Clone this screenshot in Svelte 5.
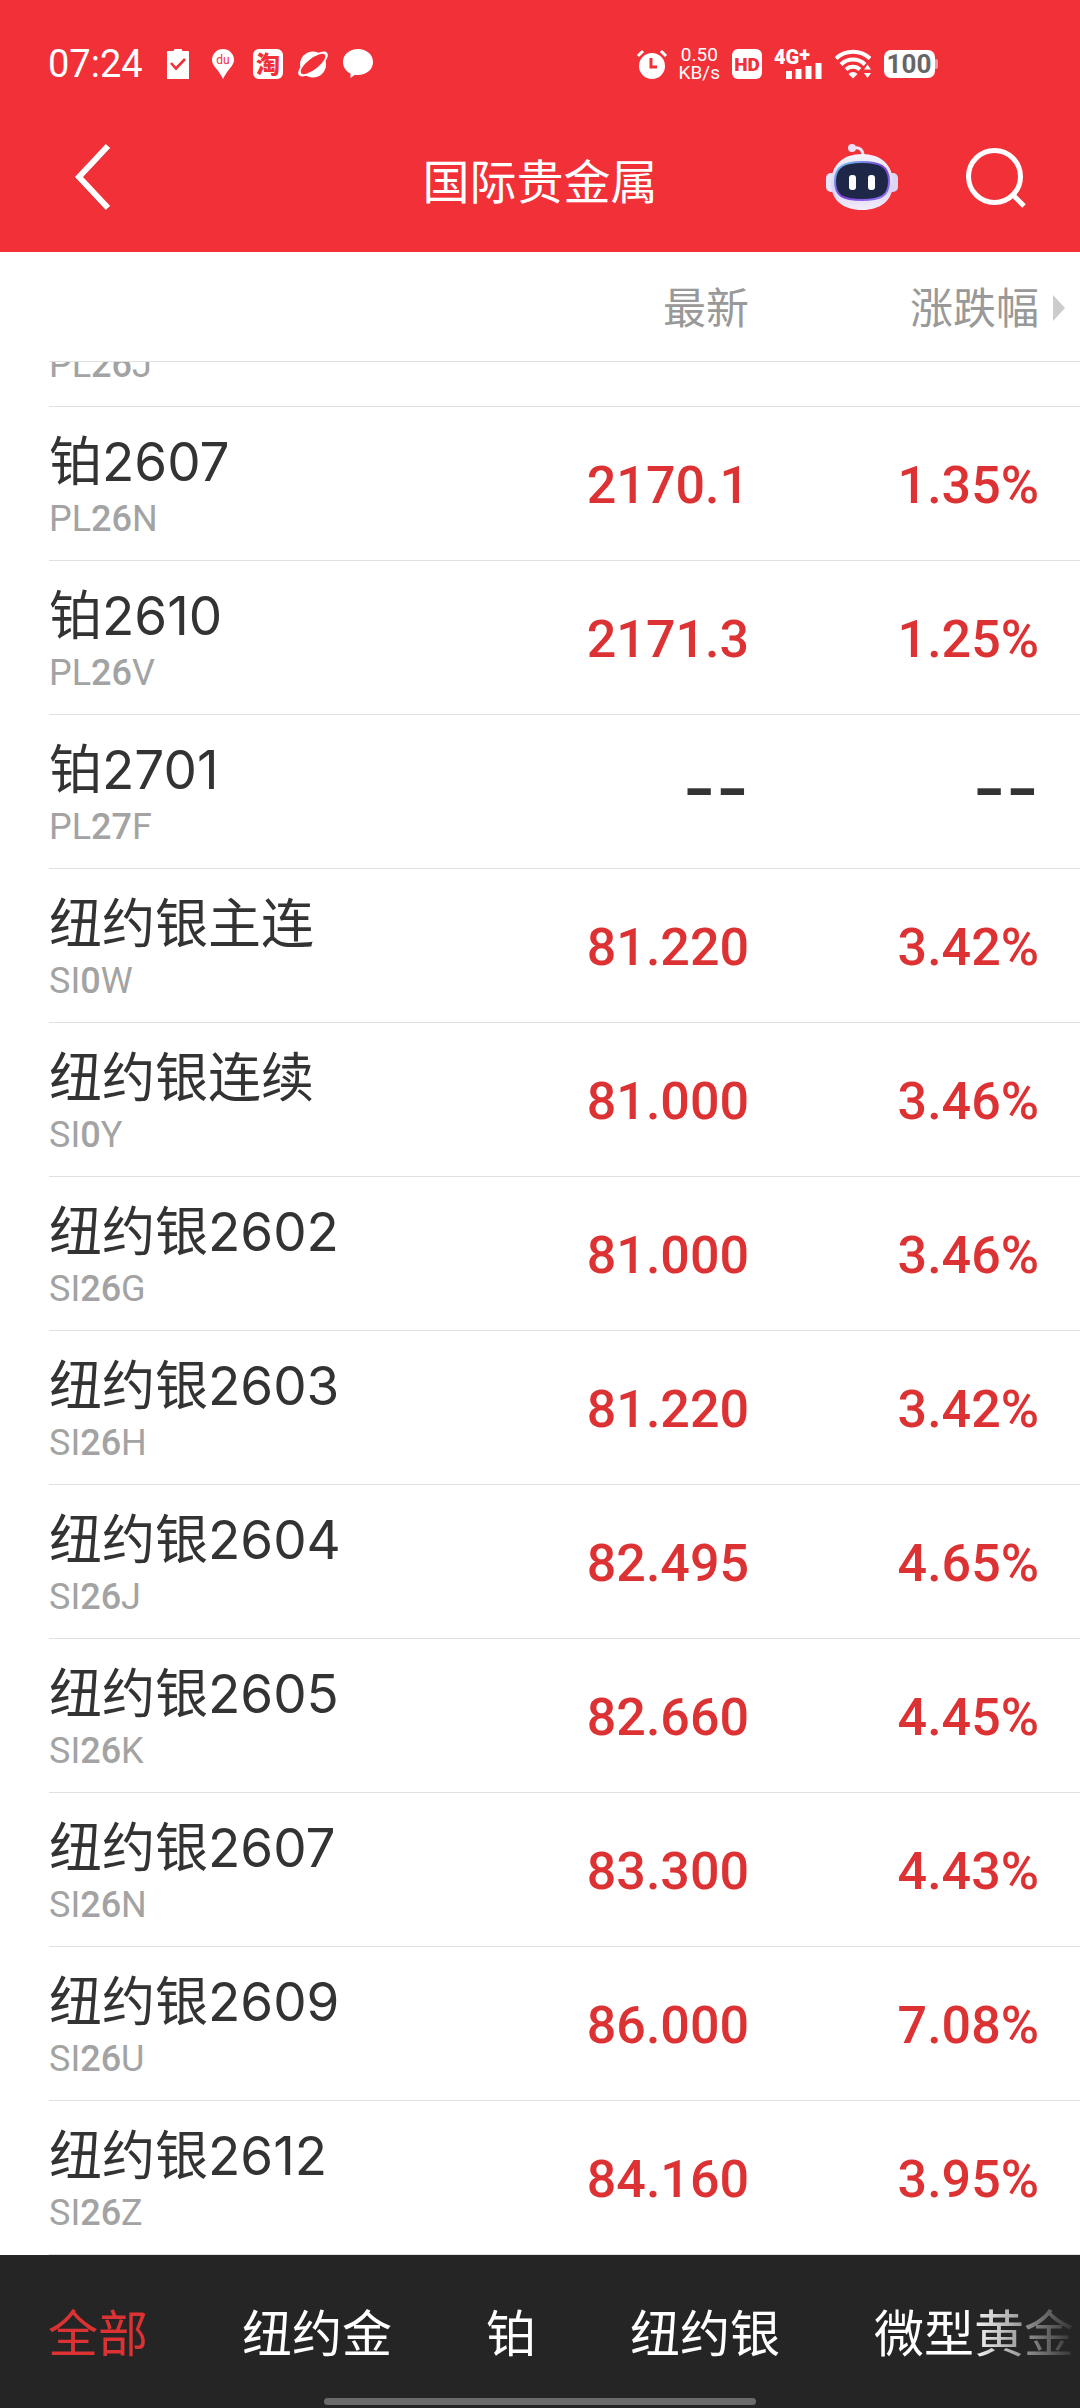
<script lang="ts">
  import { onMount } from 'svelte';

  const quotes = [
    { name: '', code: 'PL26J', price: '', change: '' },
    { name: '铂2607', code: 'PL26N', price: '2170.1', change: '1.35%' },
    { name: '铂2610', code: 'PL26V', price: '2171.3', change: '1.25%' },
    { name: '铂2701', code: 'PL27F', price: '--', change: '--' },
    { name: '纽约银主连', code: 'SI0W', price: '81.220', change: '3.42%' },
    { name: '纽约银连续', code: 'SI0Y', price: '81.000', change: '3.46%' },
    { name: '纽约银2602', code: 'SI26G', price: '81.000', change: '3.46%' },
    { name: '纽约银2603', code: 'SI26H', price: '81.220', change: '3.42%' },
    { name: '纽约银2604', code: 'SI26J', price: '82.495', change: '4.65%' },
    { name: '纽约银2605', code: 'SI26K', price: '82.660', change: '4.45%' },
    { name: '纽约银2607', code: 'SI26N', price: '83.300', change: '4.43%' },
    { name: '纽约银2609', code: 'SI26U', price: '86.000', change: '7.08%' },
    { name: '纽约银2612', code: 'SI26Z', price: '84.160', change: '3.95%' }
  ];

  const tabs = ['全部', '纽约金', '铂', '纽约银', '微型黄金'];

  let activeTab = $state('全部');
  let list: HTMLElement;

  // digits in a code are drawn heavier than its letters
  function splitCode(code: string) {
    return code.match(/\d+|\D+/g) ?? [];
  }

  onMount(() => {
    list.scrollTop = list.scrollHeight;
  });
</script>

<div class="app">
  <header>
    <div class="status-bar">
      <span class="time">07:24</span>
      <div class="notifications">
        <svg width="22" height="30" viewBox="0 0 22 30">
          <path d="M1 2h5.500l1-2h7l1 2H21a1 1 0 0 1 1 1v27H0V3a1 1 0 0 1 1-1z" fill="#fff" />
          <path d="M4 14l5 5.500L18 10" fill="none" stroke="#f13038" stroke-width="2.600" />
        </svg>
        <svg width="22" height="30" viewBox="0 0 22 30">
          <path d="M11 0a11 11 0 0 1 11 11c0 4-3 7-5 9.500S12.500 27 11 30c-1.500-3-4-7-6-9.500S0 15 0 11A11 11 0 0 1 11 0z" fill="#fff" />
          <text x="11" y="15" text-anchor="middle" font-size="12" fill="#f13038">du</text>
        </svg>
        <svg width="30" height="30" viewBox="0 0 30 30">
          <rect width="30" height="30" rx="6" fill="#fff" />
          <text x="15" y="24" text-anchor="middle" font-size="24" font-weight="900" fill="#f13038">淘</text>
        </svg>
        <svg width="30" height="30" viewBox="0 0 30 30">
          <ellipse cx="15" cy="15" rx="18" ry="7" transform="rotate(-38 15 15)" fill="#fff" />
          <circle cx="15" cy="15.500" r="13" fill="#fff" />
          <ellipse cx="15" cy="15" rx="15" ry="5.500" transform="rotate(-38 15 15)" fill="#f13038" />
        </svg>
        <svg width="30" height="30" viewBox="0 0 30 30">
          <path d="M15 0c8.500 0 15 5.500 15 13s-6.500 13-15 13c-1 0-2 0-3-.2L7.500 29V24.500C3 22.500 0 18 0 13 0 5.500 6.500 0 15 0z" fill="#fff" />
        </svg>
      </div>
      <div class="signals">
        <svg width="30" height="30" viewBox="0 0 30 30">
          <circle cx="15" cy="17" r="13" fill="#fff" />
          <path d="M1 7l5-5M29 7l-5-5" stroke="#fff" stroke-width="3" />
          <path d="M14 9v9h6" fill="none" stroke="#f13038" stroke-width="3" />
        </svg>
        <span class="speed"><span>0.50</span><span>KB/s</span></span>
        <svg width="30" height="30" viewBox="0 0 30 30">
          <rect width="30" height="30" rx="6" fill="#fff" />
          <text x="15" y="22" text-anchor="middle" font-size="19" font-weight="900" fill="#f13038">HD</text>
        </svg>
        <svg width="48" height="30" viewBox="0 0 48 30">
          <text x="0" y="15" font-size="20" font-weight="900" fill="#fff">4G<tspan dy="-3">+</tspan></text>
          <path d="M15 30v-8M24.500 30V20M34.500 30V17M44.500 30V14" stroke="#fff" stroke-width="6" />
        </svg>
        <svg width="38" height="30" viewBox="0 0 38 30">
          <g fill="none" stroke="#fff" stroke-width="4">
            <path d="M2 9.500a25 25 0 0 1 34 0" />
            <path d="M7 15.500a17 17 0 0 1 24 0" />
            <path d="M12 20.500a10 10 0 0 1 14 0" />
          </g>
          <path d="M14.500 25a6 6 0 0 1 9 0L19 29.500z" fill="#fff" />
          <path d="M30 20.500l3.500-5 3.500 5zM30 24h7l-3.500 5z" fill="#fff" />
        </svg>
        <svg width="54" height="28" viewBox="0 0 54 28">
          <rect x="50" y="9" width="4" height="10" rx="2" fill="#fff" opacity="0.500" />
          <rect width="51" height="28" rx="7" fill="#fff" />
          <text x="25" y="23" text-anchor="middle" font-size="26" font-weight="700" fill="#666">100</text>
        </svg>
      </div>
    </div>

    <nav>
      <button class="back" aria-label="返回">
        <svg width="38" height="68" viewBox="0 0 38 68">
          <path d="M34 3L5 34l29 31" fill="none" stroke="#a01018" stroke-opacity="0.300" stroke-width="6" />
          <path d="M34 2L5 33l29 31" fill="none" stroke="#fff" stroke-width="6" />
        </svg>
      </button>
      <h1>国际贵金属</h1>
      <div class="actions">
        <button aria-label="智能助手">
          <svg width="72" height="68" viewBox="0 0 72 68">
            <defs>
              <linearGradient id="shell" x1="0" y1="0" x2="0" y2="1">
                <stop offset="0" stop-color="#f7f2fc" />
                <stop offset="0.600" stop-color="#d9d4f4" />
                <stop offset="1" stop-color="#f4ecfb" />
              </linearGradient>
              <linearGradient id="rim" x1="0" y1="0" x2="1" y2="1">
                <stop offset="0" stop-color="#6fd3f0" />
                <stop offset="0.500" stop-color="#7a3fd6" />
                <stop offset="1" stop-color="#8f7bf0" />
              </linearGradient>
            </defs>
            <path d="M28 4c6-1 9 2 9 8" fill="none" stroke="#efe6f7" stroke-width="3" />
            <circle cx="26" cy="4" r="4" fill="#e9e2f6" />
            <rect x="0" y="29" width="10" height="19" rx="5" fill="#e8e3f8" />
            <rect x="62" y="29" width="10" height="19" rx="5" fill="#dcd6f5" />
            <path d="M36 10c19 0 31 11 31 29S54 66 36 66 5 57 5 39 17 10 36 10z" fill="url(#shell)" />
            <path d="M36 18c17 0 27 4 27 19s-8 19-27 19S9 52 9 37s10-19 27-19z" fill="#1e2747" stroke="url(#rim)" stroke-width="2" />
            <rect x="23" y="31" width="7" height="15" rx="3" fill="#fff" />
            <rect x="42" y="31" width="7" height="15" rx="3" fill="#fff" />
          </svg>
        </button>
        <button aria-label="搜索">
          <svg width="60" height="60" viewBox="0 0 60 60">
            <circle cx="28.500" cy="28.500" r="26" fill="none" stroke="#fff" stroke-width="5" />
            <path d="M47 47l11 11" stroke="#fff" stroke-width="5" />
          </svg>
        </button>
      </div>
    </nav>
  </header>

  <table>
    <thead>
      <tr>
        <th aria-label="名称"></th>
        <th class="price">最新</th>
        <th class="change">
          涨跌幅
          <svg class="more" width="12" height="26" viewBox="0 0 12 26"><path d="M0 0l12 13L0 26z" fill="#ccc" /></svg>
        </th>
      </tr>
    </thead>
    <tbody bind:this={list}>
      {#each quotes as quote}
        <tr>
          <td>
            <div class="name">{quote.name}</div>
            <div class="code">{#each splitCode(quote.code) as part}<span class:digits={/\d/.test(part)}>{part}</span>{/each}</div>
          </td>
          <td class="price" class:empty={quote.price === '--'}>{quote.price}</td>
          <td class="change" class:empty={quote.change === '--'}>{quote.change}</td>
        </tr>
      {/each}
    </tbody>
  </table>

  <footer>
    <div class="tabs">
      {#each tabs as tab}
        <button class:active={activeTab === tab} onclick={() => (activeTab = tab)}>{tab}</button>
      {/each}
    </div>
    <div class="home-indicator"></div>
  </footer>
</div>

<style>
  :global(body) {
    margin: 0;
    background: #fff;
  }

  .app {
    display: flex;
    flex-direction: column;
    height: 100vh;
    overflow: hidden;
    font-family: Roboto, 'Noto Sans CJK SC', sans-serif;
    color: #333;
  }

  button {
    padding: 0;
    border: none;
    background: none;
    font: inherit;
    color: inherit;
    cursor: pointer;
  }

  svg {
    display: block;
    flex-shrink: 0;
    overflow: visible;
  }

  header {
    background: #f13038;
    color: #fff;
  }

  .status-bar {
    display: flex;
    align-items: center;
    height: 88px;
    padding: 20px 142px 0 48px;
  }

  .time {
    font-size: 38px;
    line-height: 40px;
  }

  .notifications {
    display: flex;
    align-items: center;
    gap: 15px;
    margin-left: 24px;
  }

  .notifications svg:nth-child(2) {
    margin: 0 4px 0 8px;
  }

  .signals {
    display: flex;
    align-items: center;
    gap: 12px;
    margin-left: auto;
  }

  .speed {
    display: flex;
    flex-direction: column;
    align-items: center;
    font-size: 19px;
    line-height: 18px;
  }

  nav {
    display: grid;
    grid-template-columns: 1fr auto 1fr;
    align-items: center;
    height: 140px;
    padding: 0 54px 4px;
  }

  .back {
    justify-self: start;
    padding: 0 20px;
  }

  h1 {
    margin: 0;
    padding-top: 10px;
    font-size: 47px;
    line-height: 68px;
    font-weight: 400;
  }

  .actions {
    display: flex;
    align-items: center;
    justify-content: flex-end;
    gap: 68px;
  }

  table {
    flex: 1;
    display: flex;
    flex-direction: column;
    min-height: 0;
    padding-left: 49px;
  }

  thead,
  tbody {
    display: block;
  }

  tbody {
    flex: 1;
    min-height: 0;
    overflow-y: auto;
    scrollbar-width: none;
  }

  tr {
    display: grid;
    grid-template-columns: 1fr 1fr 331px;
    align-items: center;
    height: 153px;
    border-bottom: 1px solid #e0e0e0;
  }

  thead tr {
    height: 109px;
  }

  th,
  td {
    padding: 4px 0 0;
  }

  th {
    position: relative;
    color: #999;
    font-size: 43px;
    line-height: 66px;
    font-weight: 400;
    text-align: right;
  }

  .change {
    padding-right: 41px;
  }

  td.price,
  td.change {
    color: #dc3234;
    font-size: 52px;
    line-height: 64px;
    font-weight: 500;
    text-align: right;
  }

  td.empty {
    padding-top: 0;
    padding-bottom: 8px;
  }

  td.price.empty,
  td.change.empty {
    color: #333;
    font-family: Inter, sans-serif;
    font-size: 72px;
  }

  .more {
    position: absolute;
    top: 23px;
    right: 15px;
  }

  .name {
    min-height: 66px;
    font-family: Inter, 'Noto Sans CJK SC', sans-serif;
    font-size: 53px;
    line-height: 66px;
  }

  .code {
    color: #a3a3a3;
    font-size: 36px;
    line-height: 48px;
  }

  .digits {
    font-weight: 500;
  }

  footer {
    position: relative;
    background: #252525;
    color: #fff;
  }

  footer::after {
    content: '';
    position: absolute;
    top: 0;
    right: 0;
    width: 110px;
    height: 100%;
    background: linear-gradient(to right, rgba(37, 37, 37, 0), #252525);
    pointer-events: none;
  }

  .tabs {
    display: flex;
    align-items: center;
    gap: 94px;
    padding: 44px 0 37px 48px;
    overflow: hidden;
    font-size: 50px;
    line-height: 72px;
    white-space: nowrap;
  }

  .tabs button {
    flex-shrink: 0;
  }

  .tabs .active {
    color: #dc3234;
  }

  .home-indicator {
    position: absolute;
    bottom: 3px;
    left: 30%;
    width: 40%;
    height: 7px;
    border-radius: 4px;
    background: #6b6b6b;
  }
</style>
